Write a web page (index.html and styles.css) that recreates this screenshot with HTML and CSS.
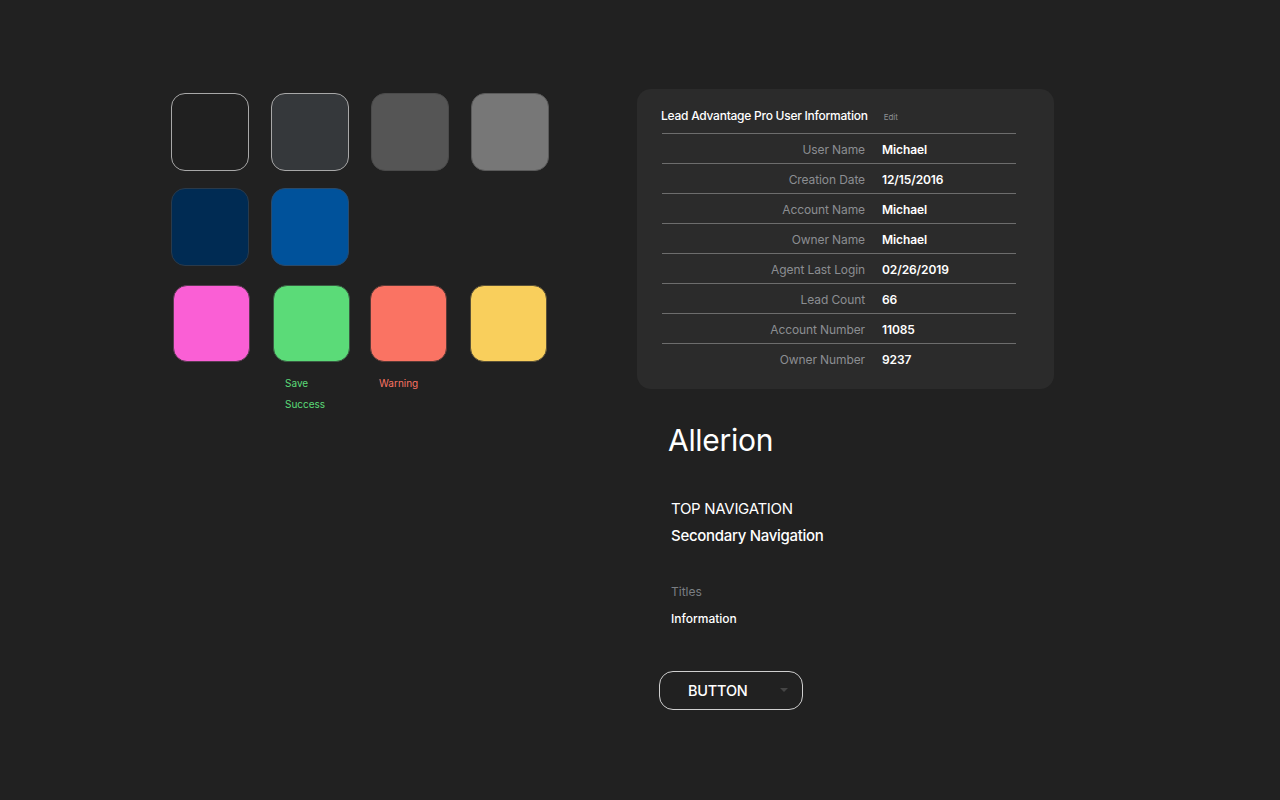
FILE: index.html
```html
<!DOCTYPE html>
<html lang="en">
<head>
<meta charset="utf-8">
<title>Allerion Style Guide</title>
<link rel="stylesheet" href="styles.css">
</head>
<body>
<main class="page">
  <section class="palette">
    <div class="swatch-row">
      <div class="swatch sw-black"></div>
      <div class="swatch sw-charcoal"></div>
      <div class="swatch sw-gray"></div>
      <div class="swatch sw-lightgray"></div>
    </div>
    <div class="swatch-row row-2">
      <div class="swatch sw-navy"></div>
      <div class="swatch sw-blue"></div>
    </div>
    <div class="swatch-row row-3">
      <div class="swatch sw-pink shift"></div>
      <div class="swatch sw-green shift"></div>
      <div class="swatch sw-red"></div>
      <div class="swatch sw-yellow"></div>
    </div>
    <div class="labels">
      <div class="label-col label-green">
        <span>Save</span>
        <span>Success</span>
      </div>
      <div class="label-col label-red">
        <span>Warning</span>
      </div>
    </div>
  </section>

  <section class="side">
    <div class="card">
      <div class="card-head">
        <h2 class="card-title">Lead Advantage Pro User Information</h2>
        <span class="edit">Edit</span>
      </div>
      <dl class="info">
        <div class="info-row"><dt>User Name</dt><dd>Michael</dd></div>
        <div class="info-row"><dt>Creation Date</dt><dd>12/15/2016</dd></div>
        <div class="info-row"><dt>Account Name</dt><dd>Michael</dd></div>
        <div class="info-row"><dt>Owner Name</dt><dd>Michael</dd></div>
        <div class="info-row"><dt>Agent Last Login</dt><dd>02/26/2019</dd></div>
        <div class="info-row"><dt>Lead Count</dt><dd>66</dd></div>
        <div class="info-row"><dt>Account Number</dt><dd>11085</dd></div>
        <div class="info-row"><dt>Owner Number</dt><dd>9237</dd></div>
      </dl>
    </div>

    <h1 class="brand">Allerion</h1>

    <div class="type-samples">
      <div class="top-nav">TOP NAVIGATION</div>
      <div class="sec-nav">Secondary Navigation</div>
      <div class="titles">Titles</div>
      <div class="information">Information</div>
    </div>

    <button class="btn" type="button">
      <span class="btn-text">BUTTON</span>
      <span class="caret"></span>
    </button>
  </section>
</main>
</body>
</html>
```

FILE: styles.css
```css
* { box-sizing: border-box; }

html, body {
  margin: 0;
  padding: 0;
  background: #212121;
  height: 100%;
}

body {
  font-family: Inter, "Liberation Sans", Arial, sans-serif;
  color: #ffffff;
}

.page {
  display: flex;
  align-items: flex-start;
  padding-left: 171px;
  padding-top: 89px;
}

/* Palette */
.palette {
  width: 466px;
  padding-top: 4px;
  display: flex;
  flex-direction: column;
}

.swatch-row {
  display: grid;
  grid-template-columns: repeat(4, 100px);
}

.row-2 { margin-top: 17px; }
.row-3 { margin-top: 19px; }

.swatch {
  width: 78px;
  height: 78px;
  border-radius: 14px;
}

.row-3 .swatch { width: 77px; height: 77px; }
.row-3 .shift { margin-left: 2px; }
.row-3 .sw-red, .row-3 .sw-yellow { margin-left: -1px; }

.sw-black { background: #202020; border: 1px solid #a8a8a8; }
.sw-charcoal { background: #35383b; border: 1px solid #a8a8a8; }
.sw-gray { background: #555555; border: 1px solid #4a4a4a; }
.sw-lightgray { background: #777777; border: 1px solid #5a5a5a; }
.sw-navy { background: #002b53; border: 1px solid #2a3a4a; }
.sw-blue { background: #00529b; border: 1px solid #2a4a6a; }
.sw-pink { background: #fa5fd5; border: 1px solid #5a3a52; }
.sw-green { background: #5bdb78; border: 1px solid #3a5a42; }
.sw-red { background: #fa7363; border: 1px solid #5a3a36; }
.sw-yellow { background: #f9cf5c; border: 1px solid #5a5036; }

.labels {
  display: flex;
  margin-top: 14px;
  padding-left: 114px;
}

.label-col {
  display: flex;
  flex-direction: column;
  gap: 7px;
  font-size: 10px;
  line-height: 14px;
}

.label-green { color: #5bdb78; width: 94px; }
.label-red { color: #fa7363; }

/* Right side */
.side {
  width: 417px;
  display: flex;
  flex-direction: column;
}

.card {
  background: #2b2b2b;
  border-radius: 14px;
  padding: 15px 38px 15px 24px;
}

.card-head {
  display: flex;
  align-items: center;
  height: 30px;
  border-bottom: 1px solid #6d6d6d;
  margin-left: 1px;
  padding-bottom: 6px;
}

.card-title {
  margin: 0 0 0 -1px;
  font-size: 12px;
  font-weight: 500;
  letter-spacing: -0.25px;
  color: #ffffff;
}

.edit {
  margin-left: 16px;
  font-size: 8px;
  color: #8c8f93;
  margin-top: 2px;
}

.info {
  margin: 0 0 0 1px;
}

.info-row {
  display: flex;
  align-items: center;
  height: 30px;
  border-bottom: 1px solid #6d6d6d;
  font-size: 12px;
  padding-top: 1px;
}

.info-row:last-child { border-bottom: none; }

.info-row dt {
  width: 203px;
  text-align: right;
  color: #8b8e92;
  letter-spacing: -0.1px;
}

.info-row dd {
  margin: 0 0 0 17px;
  color: #ffffff;
  font-weight: 600;
  letter-spacing: -0.1px;
}

.brand {
  margin: 33px 0 0 31px;
  font-size: 30px;
  font-weight: 400;
  line-height: 36px;
  letter-spacing: -0.3px;
  color: #ffffff;
}

.type-samples {
  margin: 42px 0 0 34px;
  display: flex;
  flex-direction: column;
}

.top-nav {
  font-size: 15px;
  line-height: 18px;
  font-weight: 400;
  letter-spacing: -0.3px;
}

.sec-nav {
  margin-top: 9px;
  font-size: 15px;
  line-height: 18px;
  font-weight: 500;
  letter-spacing: -0.3px;
}

.titles {
  margin-top: 39px;
  font-size: 12px;
  line-height: 16px;
  color: #7a7e83;
}

.information {
  margin-top: 11px;
  font-size: 12px;
  line-height: 16px;
  font-weight: 500;
}

.btn {
  margin: 44px 0 0 22px;
  width: 144px;
  height: 39px;
  border: 1px solid #cfcfcf;
  border-radius: 14px;
  background: transparent;
  color: #ffffff;
  display: flex;
  align-items: center;
  padding: 0 0 1px 28px;
  font-family: inherit;
  cursor: pointer;
}

.btn-text {
  font-size: 14.5px;
  font-weight: 500;
  letter-spacing: -0.2px;
}

.caret {
  margin-left: 32px;
  margin-top: -1px;
  width: 0;
  height: 0;
  border-left: 4px solid transparent;
  border-right: 4px solid transparent;
  border-top: 4px solid #454545;
}
```
